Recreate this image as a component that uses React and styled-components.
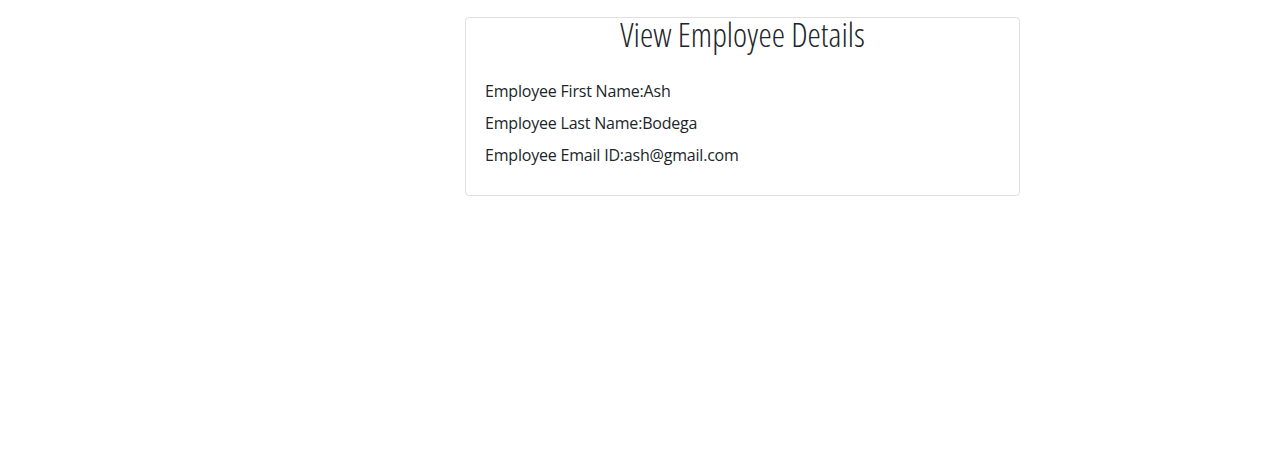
import React from "react";
import styled, { createGlobalStyle } from "styled-components";

const Global = createGlobalStyle`
  html, body { margin: 0; padding: 0; background: #fff; }
  body { font-family: "Open Sans", "Liberation Sans", sans-serif; color: #212529; }
`;

const Page = styled.div`
  display: flex;
  padding: 17px 0 0 465px;
`;

const Card = styled.div`
  width: 553px;
  border: 1px solid rgba(0, 0, 0, 0.125);
  border-radius: 4px;
  display: flex;
  flex-direction: column;
`;

const Title = styled.h3`
  margin: 0;
  text-align: center;
  font-family: "Open Sans", sans-serif;
  font-stretch: 75%;
  font-weight: 300;
  font-size: 33.6px;
  line-height: 32px;
  color: #212529;
`;

const Body = styled.div`
  padding: 29px 19px 20px;
  display: flex;
  flex-direction: column;
`;

const Field = styled.div`
  font-family: "Open Sans", sans-serif;
  font-size: 16px;
  line-height: 24px;
  letter-spacing: -0.2px;
  margin-bottom: 8px;
`;

export default function App() {
  const rows = [
    ["Employee First Name:", "Ash"],
    ["Employee Last Name:", "Bodega"],
    ["Employee Email ID:", "ash@gmail.com"],
  ];
  return (
    <>
      <Global />
      <Page>
        <Card>
          <Title>View Employee Details</Title>
          <Body>
            {rows.map(([k, v]) => (
              <Field key={k}>
                {k}
                {v}
              </Field>
            ))}
          </Body>
        </Card>
      </Page>
    </>
  );
}
